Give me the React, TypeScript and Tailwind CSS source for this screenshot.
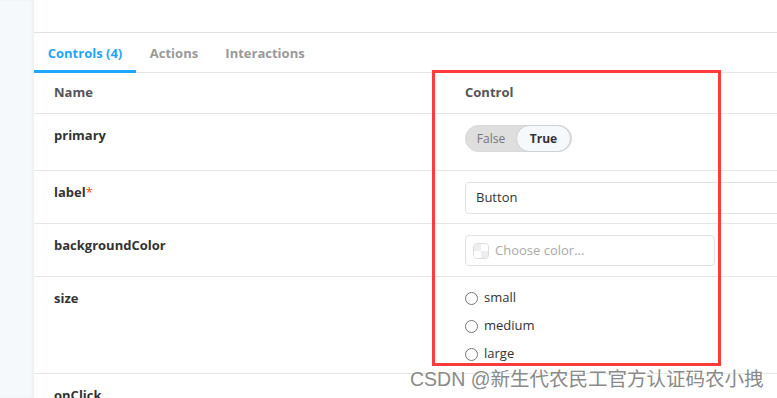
import React from "react";

const font = { fontFamily: '"Open Sans", "Noto Sans", Arial, sans-serif' };

function Row({ name, required, h, children }: { name: string; required?: boolean; h: string; children?: React.ReactNode }) {
  return (
    <div className={`flex shrink-0 border-b border-[#e6e6e6] ${h}`}>
      <div className="w-[416px] shrink-0 pl-[20px] pt-[11px] text-[13px] font-bold leading-[20px] text-[#333]">
        {name}
        {required && <span className="font-normal text-[#ff4400]">*</span>}
      </div>
      <div className="flex-1 pl-[15px] pt-[11px]">{children}</div>
    </div>
  );
}

export default function App() {
  return (
    <div className="relative flex h-[398px] w-[777px] overflow-hidden bg-white" style={font}>
      <div className="h-full w-[34px] shrink-0 bg-[#f6f9fc] shadow-[inset_-2px_0_3px_rgba(0,0,0,0.04)]" />
      <div className="flex min-w-0 flex-1 flex-col">
        <div className="h-[33px] shrink-0 border-b border-[#e2e2e2]" />
        <div className="flex h-[40px] shrink-0 border-b border-[#e6e6e6] text-[13px] font-bold leading-[20px]">
          <div className="relative flex w-[102px] items-center justify-center text-[#1ea7fd]">
            Controls (4)
            <div className="absolute bottom-[-1px] left-0 right-0 h-[3px] bg-[#1ea7fd]" />
          </div>
          <div className="flex w-[76px] items-center justify-center text-[#999]">Actions</div>
          <div className="flex w-[106px] items-center justify-center text-[#999]">Interactions</div>
        </div>
        <div className="flex h-[41px] shrink-0 items-center border-b border-[#e6e6e6] text-[13px] font-bold text-[#333]">
          <div className="w-[416px] pl-[20px] text-[#555]">Name</div>
          <div className="pl-[15px] text-[#555]">Control</div>
        </div>
        <Row name="primary" h="h-[57px]">
          <div className="flex h-[27px] w-[107px] items-center rounded-full border border-[#d8d8d8] bg-[#dedede] p-0 text-[12px] leading-none">
            <span className="flex w-[50px] justify-center text-[#777]">False</span>
            <span className="flex h-[27px] flex-1 items-center justify-center rounded-full border border-[#d0d0d0] bg-[#f6f9fc] font-bold text-[#333]">
              True
            </span>
          </div>
        </Row>
        <Row name="label" required h="h-[53px]">
          <div className="flex h-[32px] w-[400px] items-center rounded-[4px] border border-[#e2e2e2] pl-[10px] text-[13px] text-[#333]">
            Button
          </div>
        </Row>
        <Row name="backgroundColor" h="h-[53px]">
          <div className="flex h-[31px] w-[250px] items-center gap-[6px] rounded-[4px] border border-[#e2e2e2] pl-[7px] text-[13px] text-[#aaa]">
            <div className="grid h-[16px] w-[16px] grid-cols-2 overflow-hidden rounded-[4px] border border-[#ddd]">
              <div className="bg-[#eee]" />
              <div className="bg-white" />
              <div className="bg-white" />
              <div className="bg-[#eee]" />
            </div>
            Choose color...
          </div>
        </Row>
        <Row name="size" h="h-[97px]">
          <div className="flex flex-col gap-[8px]">
            {["small", "medium", "large"].map((s) => (
              <div key={s} className="flex h-[20px] items-center gap-[6px] text-[13px] text-[#333]">
                <div className="h-[13px] w-[13px] rounded-full border border-[#767676] bg-white" />
                {s}
              </div>
            ))}
          </div>
        </Row>
        <Row name="onClick" h="h-[40px]">
          <span className="text-[13px] leading-[16px] text-[#333]">-</span>
        </Row>
      </div>
      <div className="pointer-events-none absolute left-[432px] top-[70px] h-[296px] w-[289px] border-[3px] border-[#ff3b3b]" />
      <div
        className="pointer-events-none absolute left-[410px] top-[367px] whitespace-nowrap text-[19.5px] leading-[24px] text-[#8a8a8a]"
        style={{ fontFamily: '"Liberation Sans", "Noto Sans CJK SC", sans-serif', textShadow: "0 0 2px #fff, 0 0 2px #fff" }}
      >
        CSDN @新生代农民工官方认证码农小拽
      </div>
    </div>
  );
}
